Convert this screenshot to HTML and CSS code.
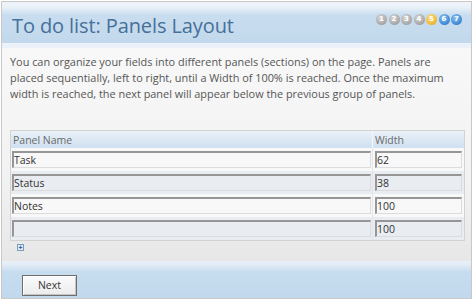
FILE: index.html
```html
<!DOCTYPE html>
<html lang="en">
<head>
    <meta charset="UTF-8">
    <title>To do list: Panels Layout</title>
    <link rel="stylesheet" href="styles.css">
</head>
<body>

<div class="page">
    <div class="header">
        <h1>To do list: Panels Layout</h1>
        <div class="steps">
            <span class="step done">1</span>
            <span class="step done">2</span>
            <span class="step done">3</span>
            <span class="step done">4</span>
            <span class="step current">5</span>
            <span class="step next">6</span>
            <span class="step next">7</span>
        </div>
    </div>

    <div class="content">
        <p class="intro">
            You can organize your fields into different panels (sections) on the page. Panels are<br>
            placed sequentially, left to right, until a Width of 100% is reached. Once the maximum<br>
            width is reached, the next panel will appear below the previous group of panels.
        </p>

        <table class="panels">
            <thead>
                <tr>
                    <th class="name">Panel Name</th>
                    <th class="width">Width</th>
                </tr>
            </thead>
            <tbody>
                <tr>
                    <td class="name"><input type="text" value="Task"></td>
                    <td class="width"><input type="text" value="62"></td>
                </tr>
                <tr class="alt">
                    <td class="name"><input type="text" value="Status"></td>
                    <td class="width"><input type="text" value="38"></td>
                </tr>
                <tr>
                    <td class="name"><input type="text" value="Notes"></td>
                    <td class="width"><input type="text" value="100"></td>
                </tr>
                <tr class="alt">
                    <td class="name"><input type="text" value=""></td>
                    <td class="width"><input type="text" value="100"></td>
                </tr>
            </tbody>
        </table>

        <div class="add-row"><span class="add">+</span></div>
    </div>

    <div class="footer">
        <button class="next-btn">Next</button>
    </div>
</div>

</body>
</html>
```

FILE: styles.css
```css
body {
    margin: 0;
    font-family: 'Open Sans', 'Liberation Sans', sans-serif;
    background-color: #ffffff;
}
.page {
    margin: 1px;
    width: 469px;
    height: 296px;
    border: 1px solid #c8c8c8;
    display: flex;
    flex-direction: column;
    background: linear-gradient(#fafafa, #f2f2f2 60%, #e2e2e2);
}
.header {
    height: 41px;
    display: flex;
    align-items: center;
    justify-content: space-between;
    padding: 0 9px 0 10px;
    background: linear-gradient(#eef4fa 0px, #eaf1f8 5px, #c8ddef 13px, #c2d8ec 100%);
    border-bottom: 5px solid #eaf1f8;
}
h1 {
    margin: 6px 0 0 0;
    font-weight: normal;
    font-size: 20px;
    color: #46709a;
    letter-spacing: -0.1px;
}
.steps {
    display: flex;
    gap: 1.5px;
    margin-top: -6px;
}
.step {
    width: 11px;
    height: 11px;
    border-radius: 50%;
    font-family: 'DejaVu Sans', sans-serif;
    font-size: 7px;
    font-weight: bold;
    line-height: 11px;
    text-align: center;
    color: #ffffff;
}
.step.done {
    background: radial-gradient(circle at 40% 35%, #d8d8d8, #a4a4a4 70%, #8e8e8e);
}
.step.current {
    background: radial-gradient(circle at 40% 35%, #fbe08a, #f0b42a 70%, #d99a10);
}
.step.next {
    background: radial-gradient(circle at 40% 35%, #8ec2f0, #3a86d2 70%, #2268b4);
}
.content {
    flex: 1;
    padding: 6px 8px 0 8px;
}
.intro {
    margin: 0 0 28px 0;
    font-size: 10.9px;
    line-height: 16px;
    color: #555555;
}
.panels {
    width: 454px;
    border: 1px solid #d2d2d2;
    border-collapse: separate;
    border-spacing: 0;
}
.panels th {
    height: 17px;
    padding: 0 0 0 2px;
    text-align: left;
    font-weight: normal;
    font-size: 10.5px;
    color: #6a6a6a;
    background: linear-gradient(#eaf1f8, #cfe0f0);
}
.panels td {
    padding: 3px 1px;
    background-color: #f8f8f8;
}
.panels tr.alt td {
    background-color: #e9edf2;
}
.panels .width {
    border-left: 1px solid #e2e6ea;
}
.panels th.width {
    border-left: 1px solid #f4f8fc;
    padding-left: 2px;
}
.panels td.width {
    padding: 3px 2px;
}
.panels input {
    display: block;
    box-sizing: border-box;
    height: 17px;
    margin: 0;
    padding: 0;
    font-family: 'Open Sans', 'Liberation Sans', sans-serif;
    font-size: 10.5px;
    color: #333333;
    background: transparent;
    border-style: solid;
    border-width: 2px 1px 1px 2px;
    border-color: #969696 #dcdcdc #dcdcdc #969696;
    outline: none;
}
.panels td.name input {
    width: 359px;
}
.panels td.width input {
    width: 87px;
}
.add-row {
    padding: 3px 0 0 7px;
}
.add {
    display: block;
    width: 5px;
    height: 5px;
    border: 1px solid #7a9cc0;
    background: #dfeaf6;
    font-size: 7px;
    line-height: 5px;
    text-align: center;
    color: #2a4e80;
    font-weight: bold;
}
.footer {
    height: 37px;
    padding: 11px 0 0 20px;
    box-sizing: border-box;
    background: linear-gradient(#e8f0f8 0px, #e2ecf6 4px, #c6dcef 11px, #c2d8ec 100%);
}
.next-btn {
    width: 55px;
    height: 21px;
    padding: 0;
    font-family: 'Open Sans', 'Liberation Sans', sans-serif;
    font-size: 10.5px;
    color: #333333;
    background: linear-gradient(#fafafa, #ececec);
    border: 1px solid #6e6e6e;
    box-shadow: inset 1px 1px 0 #ffffff, inset -1px -1px 0 #c4c4c4;
}
```
